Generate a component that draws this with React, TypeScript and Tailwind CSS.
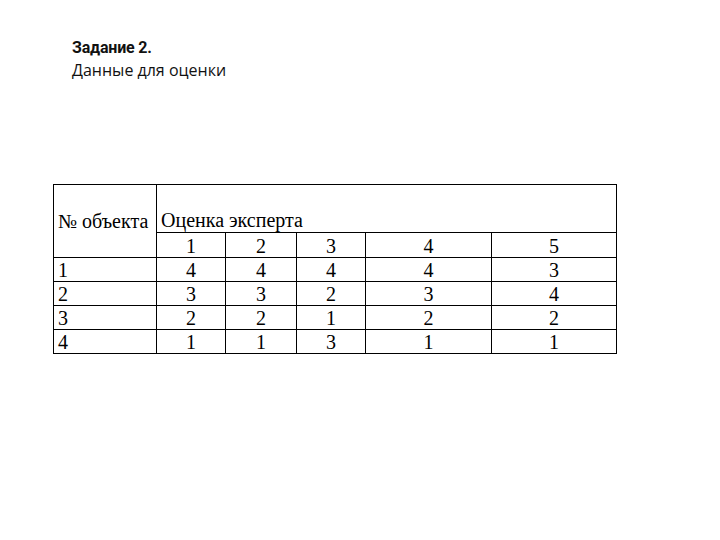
import React from "react";

const rows = [
  ["1", "4", "4", "4", "4", "3"],
  ["2", "3", "3", "2", "3", "4"],
  ["3", "2", "2", "1", "2", "2"],
  ["4", "1", "1", "3", "1", "1"],
];

export default function App() {
  return (
    <div className="w-[720px] h-[540px] bg-white text-black overflow-hidden">
      <div className="pt-[36px] pl-[72px] leading-[23px] text-[16px] text-[#111]" style={{ fontFamily: '"Open Sans", "Noto Sans", sans-serif' }}>
        <div className="font-bold tracking-[-0.2px]" style={{ fontFamily: 'Roboto, "Open Sans", sans-serif' }}>
          Задание 2.
        </div>
        <div>Данные для оценки</div>
      </div>

      <table
        className="mt-[102px] ml-[53px] w-[563px] table-fixed border-collapse text-[20px] leading-[22px]"
        style={{ fontFamily: '"Liberation Serif", "Times New Roman", serif' }}
      >
        <colgroup>
          <col className="w-[103px]" />
          <col className="w-[69px]" />
          <col className="w-[71px]" />
          <col className="w-[69px]" />
          <col className="w-[126px]" />
          <col className="w-[125px]" />
        </colgroup>
        <tbody>
          <tr className="h-[48px]">
            <td rowSpan={2} className="border border-black align-top pt-[25px] pl-[4px] whitespace-nowrap p-0">
              № объекта
            </td>
            <td colSpan={5} className="border border-black align-bottom pl-[4px] pb-[1px]">
              Оценка эксперта
            </td>
          </tr>
          <tr className="h-[25px]">
            {["1", "2", "3", "4", "5"].map((n) => (
              <td key={n} className="border border-black text-center align-bottom">
                {n}
              </td>
            ))}
          </tr>
          {rows.map((r) => (
            <tr key={r[0]} className="h-[24px]">
              {r.map((v, i) => (
                <td
                  key={i}
                  className={
                    i === 0
                      ? "border border-black align-bottom pl-[4px]"
                      : "border border-black align-bottom text-center"
                  }
                >
                  {v}
                </td>
              ))}
            </tr>
          ))}
        </tbody>
      </table>
    </div>
  );
}
